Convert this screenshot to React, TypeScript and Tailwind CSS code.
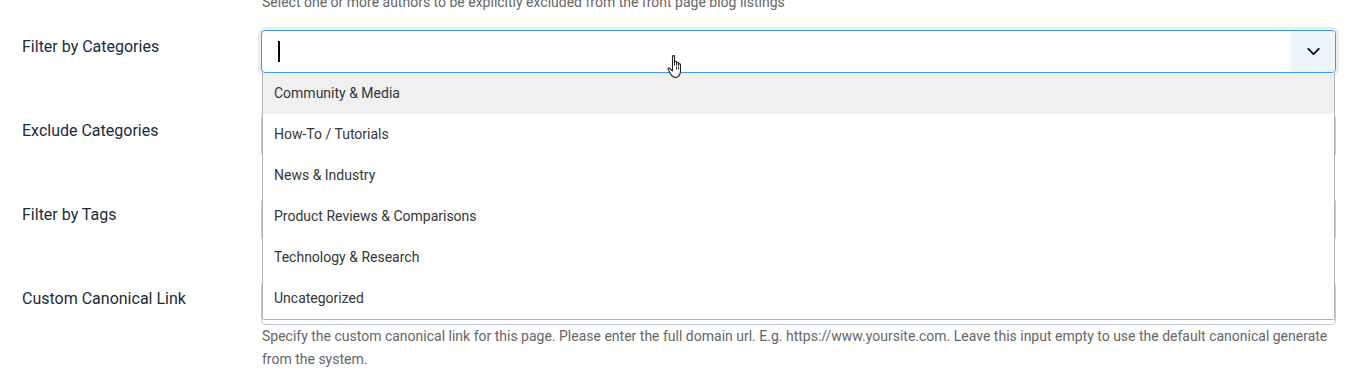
import { ChevronDown } from 'lucide-react';

const categories = [
  'Community & Media',
  'How-To / Tutorials',
  'News & Industry',
  'Product Reviews & Comparisons',
  'Technology & Research',
  'Uncategorized',
];

const HandCursor = () => (
  <svg className="absolute left-[667px] top-[54px] w-[20px] h-[26px] z-20" viewBox="0 0 20 26" fill="none">
    <path
      d="M5.5 2.5c0-1.2 2-1.2 2 0v8.5V8c0-1.1 2-1.1 2 0v3V9c0-1.1 2-1.1 2 0v2.5-1c0-1.1 2-1.1 2 0V17c0 3.5-2 6.5-5 6.5-2.5 0-3.5-1.3-5-3.5L1.3 15.6c-.8-1.2.6-2.3 1.6-1.3l2.6 2.7V2.5z"
      fill="#fff"
      stroke="#222"
      strokeWidth="1.1"
      strokeLinejoin="round"
    />
    <path d="M9.5 12.5v3M11.5 12.5v3" stroke="#222" strokeWidth="0.9" />
  </svg>
);

const Label = ({ children }: { children: string }) => (
  <div className="w-[239px] shrink-0 pt-[6px] text-[16px] leading-[22px] text-[#1c2a3a]">{children}</div>
);

const EmptyInput = () => <div className="flex-1 h-[43px] border border-[#bccadb] rounded-[4px] bg-white" />;

export default function App() {
  return (
    <div
      className="relative h-[378px] overflow-hidden bg-white pl-[22px] pr-[19px]"
      style={{ fontFamily: 'Roboto, "Liberation Sans", sans-serif' }}
    >
      <HandCursor />
      <p className="ml-[240px] -mt-[9px] text-[14px] leading-[23px] text-[#666]">
        Select one or more authors to be explicitly excluded from the front page blog listings
      </p>

      <div className="mt-[16px] flex flex-col gap-[41px]">
        {/* Filter by Categories - open select */}
        <div className="flex">
          <Label>Filter by Categories</Label>
          <div className="relative flex-1">
            <div className="flex h-[43px] overflow-hidden rounded-[4px] border border-[#3d9bf7] bg-white shadow-[0_0_0_3px_#ececec]">
              <div className="flex-1 flex items-center pl-[16px]">
                <span className="block w-[2px] h-[21px] bg-black" />
              </div>
              <div className="w-[44px] flex items-center justify-center bg-[#eef4fb]">
                <ChevronDown className="w-[21px] h-[21px] text-[#111]" strokeWidth={2.2} />
              </div>
            </div>
            <ul className="absolute top-full left-[1px] right-[1px] z-10 border border-t-0 border-[#b4b4b4] rounded-b-[2px] bg-white">
              {categories.map((c, i) => (
                <li
                  key={c}
                  className={`h-[41px] flex items-center pl-[11px] text-[14px] text-[#363636] ${
                    i === 0 ? 'bg-[#f0f0f0]' : ''
                  }`}
                >
                  {c}
                </li>
              ))}
            </ul>
          </div>
        </div>

        <div className="flex">
          <Label>Exclude Categories</Label>
          <EmptyInput />
        </div>

        <div className="flex">
          <Label>Filter by Tags</Label>
          <EmptyInput />
        </div>

        <div className="flex">
          <Label>Custom Canonical Link</Label>
          <div className="flex-1">
            <EmptyInput />
            <p className="pl-[1px] text-[14px] leading-[23px] text-[#666]">
              Specify the custom canonical link for this page. Please enter the full domain url. E.g.
              https://www.yoursite.com. Leave this input empty to use the default canonical generate from the system.
            </p>
          </div>
        </div>
      </div>
    </div>
  );
}
